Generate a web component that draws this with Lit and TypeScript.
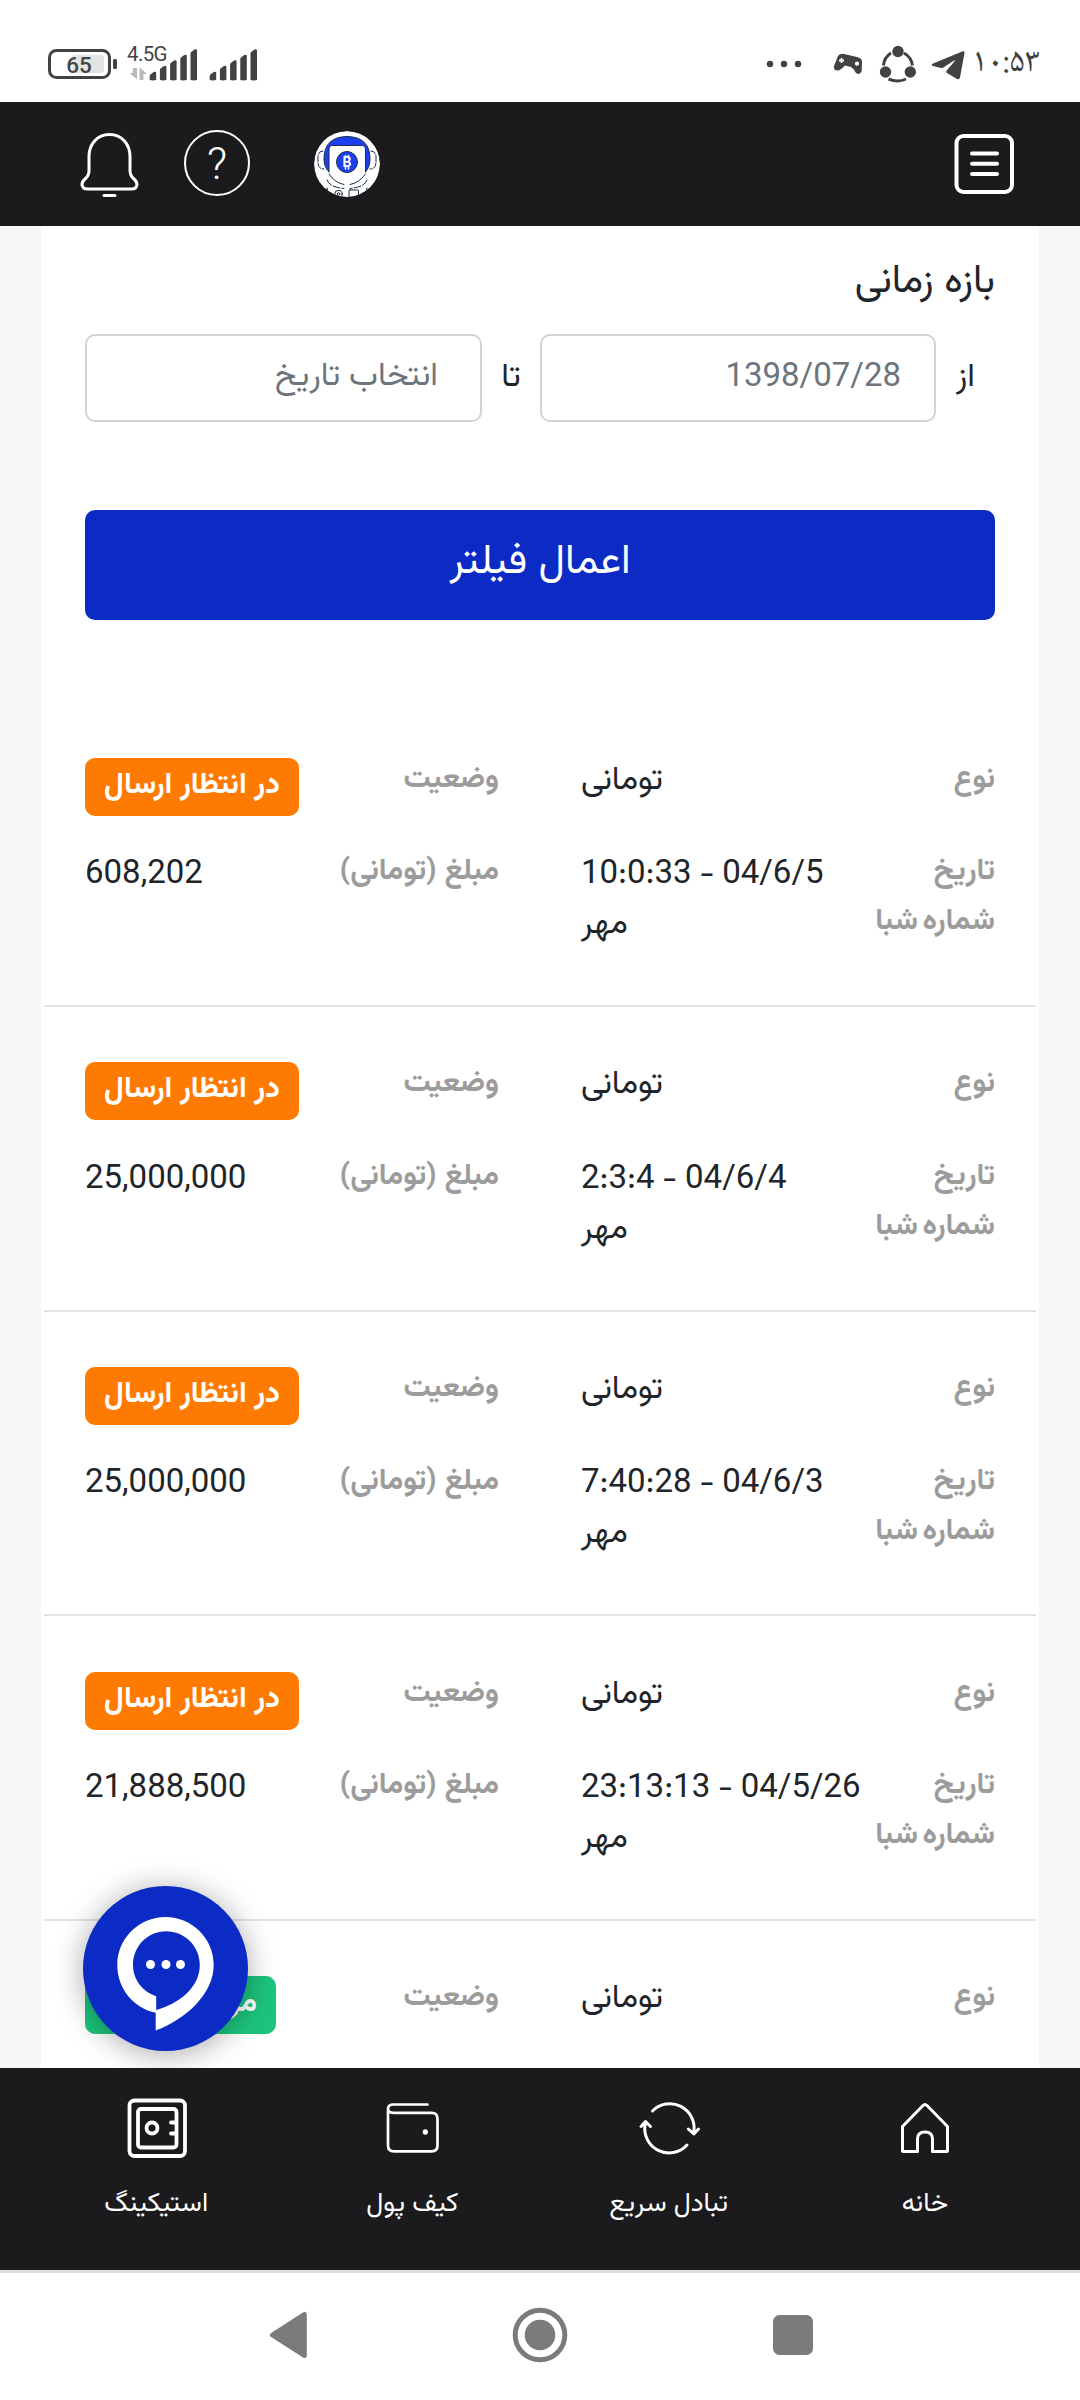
import { LitElement, html, svg, css, nothing } from "lit";
import { customElement, property } from "lit/decorators.js";

interface Withdrawal {
  type: string;
  status: string;
  tone: "pending" | "done";
  date?: string;
  amount?: string;
  bank?: string;
}

const pending = { type: "تومانی", status: "در انتظار ارسال", tone: "pending" as const, bank: "مهر" };

const records: Withdrawal[] = [
  { ...pending, date: "10:0:33 - 04/6/5", amount: "608,202" },
  { ...pending, date: "2:3:4 - 04/6/4", amount: "25,000,000" },
  { ...pending, date: "7:40:28 - 04/6/3", amount: "25,000,000" },
  { ...pending, date: "23:13:13 - 04/5/26", amount: "21,888,500" },
  { type: "تومانی", status: "مرجوع شده", tone: "done" },
];

const bars = (x: number) =>
  [72, 66, 60.5, 55, 49.5].map((top, i) => {
    const l = x + i * 10.2;
    return svg`<path d="M${l} 80 V${top + 4} Q${l} ${top + 3} ${l + 1} ${top + 2.3} L${l + 4} ${top} Q${l + 6.5} ${top - 1} ${l + 6.5} ${top + 1} V80 Q${l + 3} 80.8 ${l} 80Z"/>`;
  });

@customElement("status-bar")
class StatusBar extends LitElement {
  static styles = css`
    :host { display: flex; align-items: center; height: 102px; box-sizing: border-box; padding: 26px 40px 0 44px; background: #fff; direction: ltr; }
    svg { display: block; }
    .num { font-family: Roboto, sans-serif; fill: #444; }
    .icons { margin-left: auto; }
    .clock { font: 34px/50px "Noto Naskh Arabic", Vazirmatn, "DejaVu Sans", sans-serif; color: #404040; margin-left: 2px; width: 68px; text-align: center; white-space: nowrap; }
  `;
  render() {
    return html`
      <svg width="220" height="48" viewBox="44 40 220 48" fill="#424242">
        <rect x="72" y="55" width="32" height="18" rx="3" fill="#e4e4e4" />
        <rect x="49.5" y="50.5" width="60" height="27" rx="7" fill="none" stroke="#424242" stroke-width="3" />
        <rect x="113" y="59" width="4" height="10" rx="1.5" />
        <text class="num" x="79" y="72.8" text-anchor="middle" font-size="22.5" font-weight="500">65</text>
        <text class="num" x="127" y="61" font-size="20.5" textLength="40.5">4.5G</text>
        <path fill="#b9b9b9" d="M133 68 h4 v11.5 l-7.500 -6.500 h3z M139.500 80 h4 v-6 h3.500 l-7.500 -6.500z" />
        ${bars(149.7)} ${bars(209.7)}
      </svg>
      <svg class="icons" width="206" height="48" viewBox="764 40 206 48" fill="#424242">
        <circle cx="770" cy="64" r="3.2" /><circle cx="784" cy="64" r="3.2" /><circle cx="798" cy="64" r="3.2" />
        <path d="M838 56 Q840 53 844 54 L857 57 Q861.5 58 862 61 L861.7 71 Q860 75.500 856 73 Q854 68.500 851 67 L845 65.500 Q840.500 70.500 837.500 70.500 Q833.500 70.500 834 66 Z" />
        <path d="M841.500 58 v5 M839 60.500 h5" stroke="#fff" stroke-width="1.800" />
        <circle cx="857" cy="63.700" r="2.100" fill="#fff" />
        <g fill="none" stroke="#424242" stroke-width="3">
          <path d="M883.500 65.500 Q884 57.500 891 53" /><path d="M904 53 Q911.500 57.500 912.500 65.500" /><path d="M888.500 79 Q898 83 906 79" />
        </g>
        <circle cx="898" cy="51.500" r="5.700" /><circle cx="885.500" cy="72" r="5.700" /><circle cx="910.300" cy="72" r="5.700" />
        <path d="M962.800 51.300 Q964.800 50.800 964.500 53 L960 77.500 Q959.500 80 957 79 L947 73 Q945.500 72 946.700 70.500 L954.800 61 Q955 60 954 60.500 L943 67.800 Q942 68.300 941 68 L933 66 Q930.500 65 933 63.500 Z" />
      </svg>
      <span class="clock">۱۰:۵۳</span>
    `;
  }
}

@customElement("app-header")
class AppHeader extends LitElement {
  static styles = css`
    :host { display: flex; align-items: center; height: 124px; box-sizing: border-box; padding: 0 64px 0 78px; background: #1b1b1d; direction: ltr; }
    svg { display: block; fill: none; stroke: #fff; stroke-width: 3; stroke-linecap: round; stroke-linejoin: round; }
    .help { margin-left: 40px; }
    .help text { font: 300 44px Roboto, sans-serif; fill: #fff; stroke: none; }
    .avatar { margin-left: 53px; }
    .menu { margin-left: auto; }
    .menu * { stroke-width: 4; }
    .thin { stroke: #1b2c44; stroke-width: 1; }
    .bare { stroke: none; }
    .tick { stroke: #fff; stroke-width: 1.5; }
    .coin { font: 700 14px Roboto, sans-serif; fill: #fff; stroke: none; }
  `;
  render() {
    return html`
      <svg width="64" height="84" viewBox="78.500 122.500 64 84">
        <path d="M110 135 C97.500 135 89.500 145 89.500 157 V171 Q89.500 176 86 179 Q82.500 182 82.500 185 Q83 189.500 88 189.500 H132 Q137 189.500 137.500 185 Q137.500 182 134 179 Q130.500 176 130.500 171 V157 C130.500 145 122.500 135 110 135Z" />
        <path d="M104.500 196 H115.500" />
      </svg>
      <svg class="help" width="70" height="84" viewBox="182 122 70 84">
        <circle cx="217" cy="163" r="32" stroke-width="2" />
        <text x="217" y="178.500" text-anchor="middle">?</text>
      </svg>
      <svg class="avatar" width="84" height="84" viewBox="305 122 84 84">
        <defs><clipPath id="face"><circle cx="347" cy="164" r="33" /></clipPath></defs>
        <g clip-path="url(#face)" class="thin">
          <circle class="bare" cx="347" cy="164" r="33" fill="#fff" />
          <path fill="#1c3ff0" d="M329 172 Q324 167 324 159 Q324 137 347 136.500 Q370 137 370 159 Q370 167 365.500 172 Z" />
          <path class="bare" fill="#fff" d="M329 172 V149 Q329 145.500 332 145.500 H362.500 Q365.500 145.500 365.500 149 V172 L369 186 H325Z" />
          <path d="M329 172 V149 Q329 145.500 332 145.500 H362.500 Q365.500 145.500 365.500 149 V172" />
          <path d="M329 174 Q335 183 344 184.500 M350 184.500 Q359 183 365.500 174" />
          <path d="M323 151 Q318 151 318 157 V163 Q318 169 324 169 M371 151 Q376 151 376 157 V163 Q376 169 370 169" stroke-dasharray="6 1.500" />
          <path d="M327 180 Q329 187 344 188.500 M367 180 Q365 187 350 188.500 M327 188 Q327 193 332 195 M367 188 Q368 192 363 195" stroke-dasharray="7 2" />
          <circle cx="338.500" cy="194" r="3.700" /><circle cx="338.500" cy="194" r="1.300" />
          <rect x="349" y="190" width="9.500" height="8" rx="1" />
          <circle cx="347" cy="162" r="10.500" fill="#1c3ff0" />
          <text class="coin" x="347" y="167.200" text-anchor="middle">B</text>
          <path class="tick" d="M345.500 155.500 v2 M348.500 155.500 v2 M345.500 167 v2 M348.500 167 v2" />
        </g>
      </svg>
      <svg class="menu" width="64" height="84" viewBox="952 122.500 64 84">
        <rect x="956.500" y="136.500" width="55.500" height="56" rx="7" />
        <path d="M972 154 H997 M972 164.300 H997 M972 174.600 H997" />
      </svg>
    `;
  }
}

@customElement("withdrawal-row")
class WithdrawalRow extends LitElement {
  @property({ attribute: false }) record!: Withdrawal;
  static styles = css`
    :host { display: flex; justify-content: space-between; box-sizing: border-box; height: 304.600px; margin: 0 3px; padding: 52.400px 41px 0; border-bottom: 2px solid #e3e3e3; direction: rtl; }
    .half { width: 414px; }
    .pair { display: flex; justify-content: space-between; align-items: flex-start; height: 50px; }
    .pair.first { height: 92.500px; }
    .label { font-size: 30px; font-weight: 700; line-height: 50px; color: #9c9c9c; white-space: nowrap; }
    .label.tight { word-spacing: -3px; }
    .value { font-size: 33px; line-height: 50px; padding-top: 2.800px; color: #212529; white-space: nowrap; direction: ltr; word-spacing: -1.300px; }
    .first .value { padding-top: 1px; }
    .badge { box-sizing: border-box; height: 58px; margin-top: 3px; padding: 0 19px; border-radius: 10px; font-size: 30px; font-weight: 700; line-height: 55px; color: #fff; background: #ff7a00; white-space: nowrap; }
    .badge.done { width: 191px; background: #1cc47d; }
  `;
  render() {
    const r = this.record;
    return html`
      <div class="half">
        <div class="pair first"><span class="label">نوع</span><span class="value">${r.type}</span></div>
        ${r.date
          ? html`<div class="pair"><span class="label">تاریخ</span><span class="value">${r.date}</span></div>
              <div class="pair"><span class="label tight">شماره شبا</span><span class="value">${r.bank}</span></div>`
          : nothing}
      </div>
      <div class="half">
        <div class="pair first"><span class="label">وضعیت</span><span class="badge ${r.tone}">${r.status}</span></div>
        ${r.amount
          ? html`<div class="pair"><span class="label">مبلغ (تومانی)</span><span class="value">${r.amount}</span></div>`
          : nothing}
      </div>
    `;
  }
}

const tabs = [
  {
    label: "خانه",
    width: 3,
    icon: svg`<path d="M-22.500 23 V-1.500 L-2 -22.500 Q0 -24.500 2 -22.500 L22.500 -1.500 V23 Q22.500 23.500 22 23.500 H7.500 V11 Q7.500 4 0 4 Q-7.500 4 -7.500 11 V23.500 H-22 Q-22.500 23.500 -22.500 23Z"/>`,
  },
  {
    label: "تبادل سریع",
    width: 3,
    icon: svg`<path d="M-16.500 -17 A24.300 24.300 0 0 1 24.800 4 M19.300 1 L24.800 6 L29.500 1 M18 17 A24.300 24.300 0 0 1 -23.800 -4 M-28 -1.500 L-23.500 -6.500 L-18.500 -1.500"/>`,
  },
  {
    label: "کیف پول",
    width: 2.7,
    icon: svg`<path d="M15.500 -23.500 H-18.500 Q-24 -23.500 -24 -19 Q-24 -15.200 -18.500 -15.200 H19.500 Q25.500 -15.200 25.500 -9.500 V17.500 Q25.500 23.300 19.500 23.300 H-18 Q-24 23.300 -24 17.500 V-19"/><circle cx="13.300" cy="4" r="1.300"/>`,
  },
  {
    label: "استیکینگ",
    width: 3.8,
    icon: svg`<rect x="-26.500" y="-27.500" width="55.500" height="55.500" rx="5"/><rect x="-18" y="-19" width="38.500" height="38.500" rx="3"/><circle cx="-4" cy="0" r="5.500"/><path d="M15 -5.500 H20 M15 5.500 H20"/>`,
  },
];

@customElement("tab-bar")
class TabBar extends LitElement {
  static styles = css`
    :host { display: flex; box-sizing: border-box; height: 202px; padding: 28px 27px 0 28px; background: #1b1b1d; direction: rtl; }
    .tab { flex: 1; display: flex; flex-direction: column; align-items: center; gap: 25px; color: #fff; font-size: 26.700px; line-height: 40px; }
    svg { display: block; fill: none; stroke: #fff; stroke-linecap: round; stroke-linejoin: round; }
  `;
  render() {
    return tabs.map(
      (t) => html`<div class="tab">
        <svg width="64" height="64" viewBox="-32 -32 64 64" stroke-width=${t.width}>${t.icon}</svg>
        <span>${t.label}</span>
      </div>`
    );
  }
}

@customElement("app-root")
class AppRoot extends LitElement {
  static styles = css`
    :host { display: flex; flex-direction: column; width: 1080px; height: 2400px; background: #fff; font-family: Vazirmatn, Roboto, "DejaVu Sans", sans-serif; color: #212529; direction: rtl; }
    .main { position: relative; height: 1842px; overflow: hidden; background: #f6f6f6; padding: 0 41px; }
    .card { background: #fff; height: 1842px; overflow: hidden; }
    .filters { padding: 26px 44px 0; }
    .title { font-size: 39.500px; line-height: 60px; }
    .range { display: grid; grid-template-columns: 59px 396px 58px 397px; height: 88px; margin-top: 22px; font-size: 33px; line-height: 88px; }
    .tag { text-align: center; }
    .tag.from { text-align: right; padding-right: 20px; }
    .field { box-sizing: border-box; border: 2px solid #ced4da; border-radius: 10px; padding-right: 33px; line-height: 84px; color: #6c757d; }
    .field.empty { padding-right: 42px; line-height: 83px; }
    .apply { margin-top: 88px; height: 110px; border-radius: 10px; background: #0c2bc5; color: #fff; font-size: 41.400px; line-height: 106px; text-align: center; }
    .list { margin-top: 82.500px; }
    .chat { position: absolute; left: 82.500px; top: 1660px; width: 165px; height: 165px; border-radius: 50%; background: #0c2bc5; box-shadow: 0 3px 30px rgba(0, 0, 0, 0.34); }
    .chat svg { display: block; }
    .system { display: flex; align-items: center; box-sizing: border-box; height: 130px; border-top: 3px solid #dedede; padding: 0 258px 3px; gap: 192.500px; direction: ltr; }
    .system svg { display: block; flex: none; }
  `;
  render() {
    return html`
      <status-bar></status-bar>
      <app-header></app-header>
      <div class="main">
        <div class="card">
          <div class="filters">
            <div class="title">بازه زمانی</div>
            <div class="range">
              <span class="tag from">از</span>
              <div class="field">1398/07/28</div>
              <span class="tag">تا</span>
              <div class="field empty">انتخاب تاریخ</div>
            </div>
            <div class="apply">اعمال فیلتر</div>
          </div>
          <div class="list">${records.map((r) => html`<withdrawal-row .record=${r}></withdrawal-row>`)}</div>
        </div>
        <div class="chat">
          <svg width="165" height="165" viewBox="83 1886 165 165" fill="#fff">
            <path fill-rule="evenodd" d="M155.700 2012.700 C134 2008.500 117.300 1989 117.300 1965 C117.300 1938.500 139 1917 165.500 1917 C192 1917 213.700 1938.500 213.700 1965 C213.700 1993 187 2019 155.700 2030.500 Z M156.200 1996.200 V2010 C178 2004 199.800 1988 199.800 1965 C199.800 1946 184.500 1931.300 166 1931.300 C148 1931.300 133 1946 133 1965 C133 1980 143 1992 156.200 1996.200Z" />
            <circle cx="150.500" cy="1964.500" r="4.500" /><circle cx="166" cy="1964.500" r="4.500" /><circle cx="180.500" cy="1964.500" r="4.500" />
          </svg>
        </div>
      </div>
      <tab-bar></tab-bar>
      <div class="system">
        <svg width="60" height="60" viewBox="258 2305 60 60" fill="#7b7b7b" stroke="#7b7b7b" stroke-width="5" stroke-linejoin="round"><path d="M272.500 2335 L304.300 2314.500 V2355.500Z" /></svg>
        <svg width="60" height="60" viewBox="-29 -30 60 60"><circle r="24.800" fill="none" stroke="#7b7b7b" stroke-width="5" /><circle r="15.300" fill="#7b7b7b" /></svg>
        <svg width="60" height="60" viewBox="-30 -30 60 60"><rect x="-20" y="-20" width="40" height="40" rx="6.500" fill="#7b7b7b" /></svg>
      </div>
    `;
  }
}
